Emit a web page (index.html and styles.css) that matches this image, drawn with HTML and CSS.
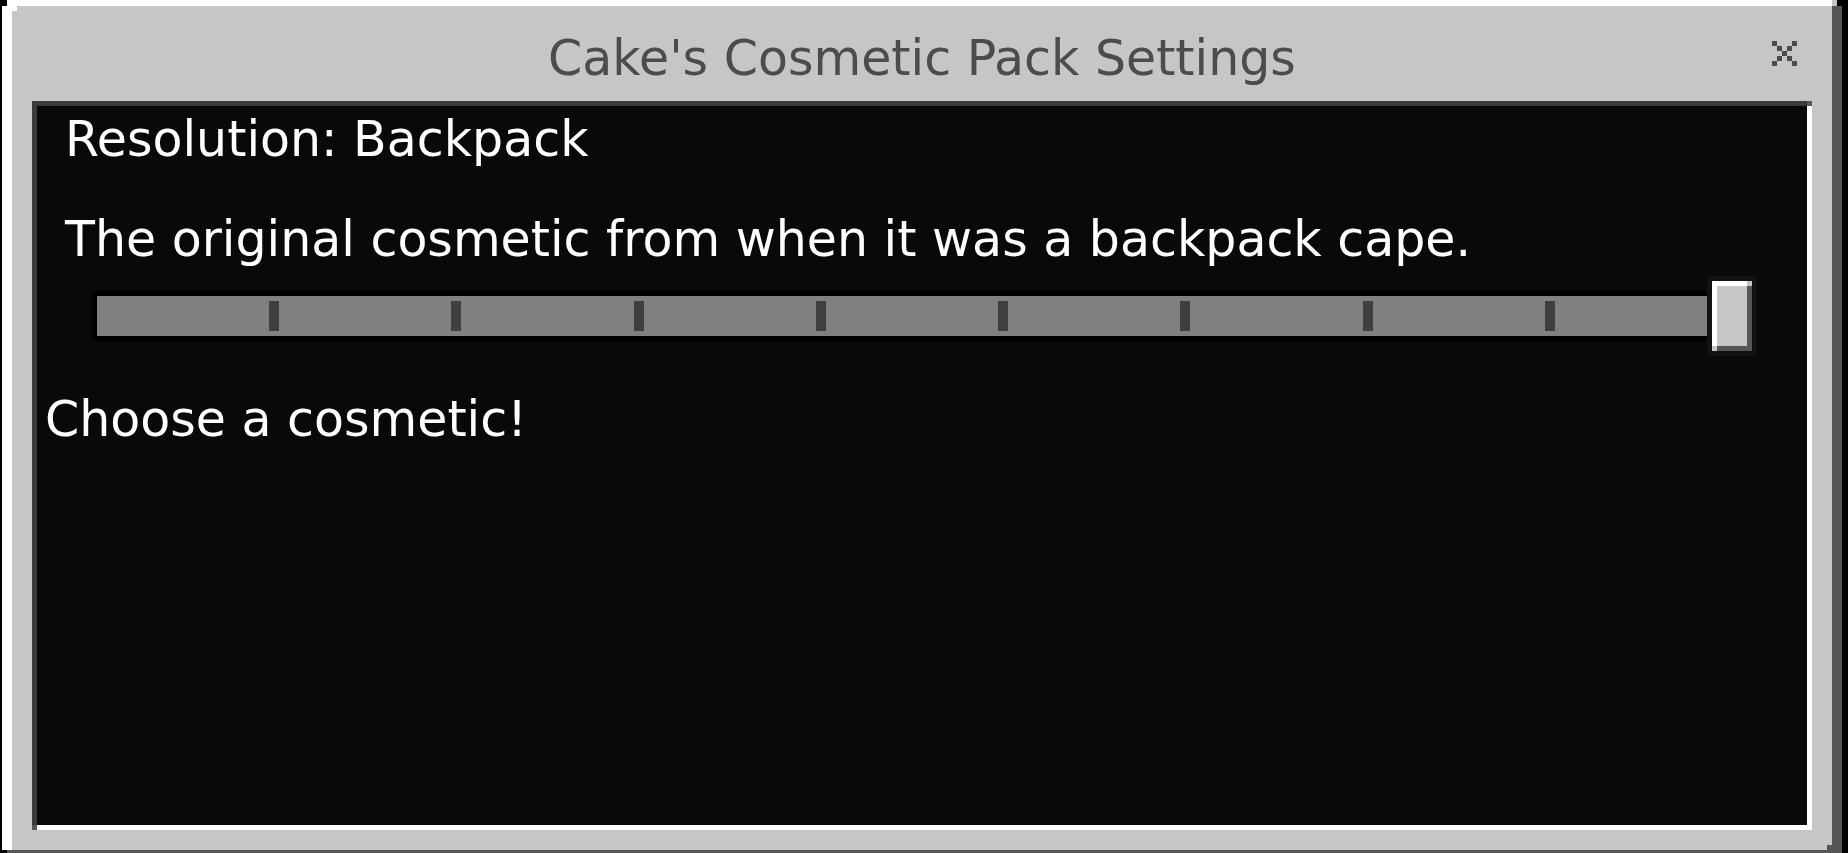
FILE: index.html
```html
<!DOCTYPE html>
<html lang="en">
<head>
    <meta charset="UTF-8">
    <meta name="viewport" content="width=device-width, initial-scale=1.0">
    <title>Cake's Cosmetic Pack Settings</title>
    <link rel="stylesheet" href="styles.css">
</head>
<body>
    <main class="panel">
        <header class="header">
            <h1>Cake's Cosmetic Pack Settings</h1>
            <button class="close-btn" type="button" aria-label="Close">
                <svg viewBox="0 0 5 5" width="25" height="25" shape-rendering="crispEdges">
                    <path d="M0 0h1v1h-1zM4 0h1v1h-1zM1 1h1v1h-1zM3 1h1v1h-1zM2 2h1v1h-1zM1 3h1v1h-1zM3 3h1v1h-1zM0 4h1v1h-1zM4 4h1v1h-1z" fill="currentColor"/>
                </svg>
            </button>
        </header>

        <form class="content">
            <div class="setting">
                <label class="setting-label" for="resolution">
                    <span>Resolution: Backpack</span>
                    <span>The original cosmetic from when it was a backpack cape.</span>
                </label>
                <div class="slider">
                    <div class="track">
                        <i></i><i></i><i></i><i></i><i></i><i></i><i></i><i></i>
                    </div>
                    <input type="range" id="resolution" min="0" max="9" step="1" value="9">
                </div>
            </div>
            <p class="hint">Choose a cosmetic!</p>
        </form>
    </main>
</body>
</html>
```
FILE: styles.css
```css
:root {
    --px: 5px;
    --face: #c6c6c6;
    --light: #ffffff;
    --shade: #565656;
    --inset: #3a3a3a;
    --bg: #090909;
    --title: #4c4c4c;
    --track: #808080;
    --tick: #3f3f3f;
}

* {
    margin: 0;
    padding: 0;
    box-sizing: border-box;
}

body {
    background: #000;
    color: #fff;
    font-family: "DejaVu Sans", sans-serif;
    font-size: 49px;
    line-height: 50px;
}

/* bevelled window frame, stepped corners */
.panel {
    display: flex;
    flex-direction: column;
    min-height: 100vh;
    margin: 0 6px 0 2px;
    padding: 6px 30px 23px;
    background:
        linear-gradient(#000, #000) 0 0 / 5px 6px no-repeat,
        linear-gradient(#000, #000) 100% 0 / 5px 6px no-repeat,
        linear-gradient(#000, #000) 0 100% / 5px 3px no-repeat,
        linear-gradient(var(--face), var(--face)) calc(100% - 5px) 0 / 5px 6px no-repeat,
        linear-gradient(var(--light), var(--light)) 10px 6px / 5px 5px no-repeat,
        linear-gradient(var(--shade), var(--shade)) calc(100% - 10px) calc(100% - 3px) / 5px 5px no-repeat,
        linear-gradient(var(--light), var(--light)) 0 0 / 100% 6px no-repeat,
        linear-gradient(var(--shade), var(--shade)) 0 100% / 100% 3px no-repeat,
        linear-gradient(var(--light), var(--light)) 0 0 / 10px 100% no-repeat,
        linear-gradient(var(--shade), var(--shade)) 100% 0 / 10px 100% no-repeat,
        var(--face);
}

.header {
    display: grid;
    grid-template-columns: 40px 1fr 40px;
    align-items: center;
    height: 95px;
    color: var(--title);
}

.header h1 {
    grid-column: 2;
    padding-top: 10px;
    font-size: 49px;
    font-weight: 400;
    text-align: center;
}

.close-btn {
    justify-self: start;
    height: 25px;
    border: none;
    background: none;
    color: inherit;
    cursor: pointer;
}

.close-btn svg {
    display: block;
}

/* sunken content area, square joins at the corners */
.content {
    flex: 1;
    padding: 14px 13px;
    background:
        linear-gradient(var(--shade), var(--shade)) 100% 0 / 5px 5px no-repeat,
        linear-gradient(var(--shade), var(--shade)) 0 100% / 5px 5px no-repeat,
        linear-gradient(var(--inset), var(--inset)) 0 0 / 100% 5px no-repeat,
        linear-gradient(var(--light), var(--light)) 0 100% / 100% 5px no-repeat,
        linear-gradient(var(--inset), var(--inset)) 0 0 / 5px 100% no-repeat,
        linear-gradient(var(--light), var(--light)) 100% 0 / 5px 100% no-repeat,
        var(--bg);
}

.setting {
    padding: 0 42px 0 20px;
}

.setting-label {
    display: grid;
    gap: 50px;
}

.slider {
    display: grid;
    align-items: center;
    margin: 11px 0 0 2px;
}

.slider > * {
    grid-area: 1 / 1;
}

.track {
    display: grid;
    grid-template-columns: repeat(9, 1fr);
    align-items: center;
    height: 50px;
    margin: 0 25px;
    background: var(--track);
    box-shadow: inset 0 0 0 var(--px) #000;
}

.track i {
    justify-self: end;
    width: 10px;
    height: 30px;
    margin-right: -5px;
    background: var(--tick);
}

.slider input {
    appearance: none;
    width: 100%;
    height: 80px;
    background: none;
    cursor: pointer;
}

.slider input::-webkit-slider-thumb {
    appearance: none;
    width: 50px;
    height: 80px;
    border: var(--px) solid #111;
    background:
        linear-gradient(var(--face), var(--face)) 100% 0 / 5px 5px no-repeat,
        linear-gradient(var(--face), var(--face)) 0 100% / 5px 5px no-repeat,
        linear-gradient(var(--light), var(--light)) 0 0 / 100% 5px no-repeat,
        linear-gradient(var(--light), var(--light)) 0 0 / 5px 100% no-repeat,
        linear-gradient(var(--shade), var(--shade)) 100% 0 / 5px 100% no-repeat,
        linear-gradient(var(--shade), var(--shade)) 0 100% / 100% 5px no-repeat,
        var(--face);
}

.hint {
    margin-top: 39px;
}
```
